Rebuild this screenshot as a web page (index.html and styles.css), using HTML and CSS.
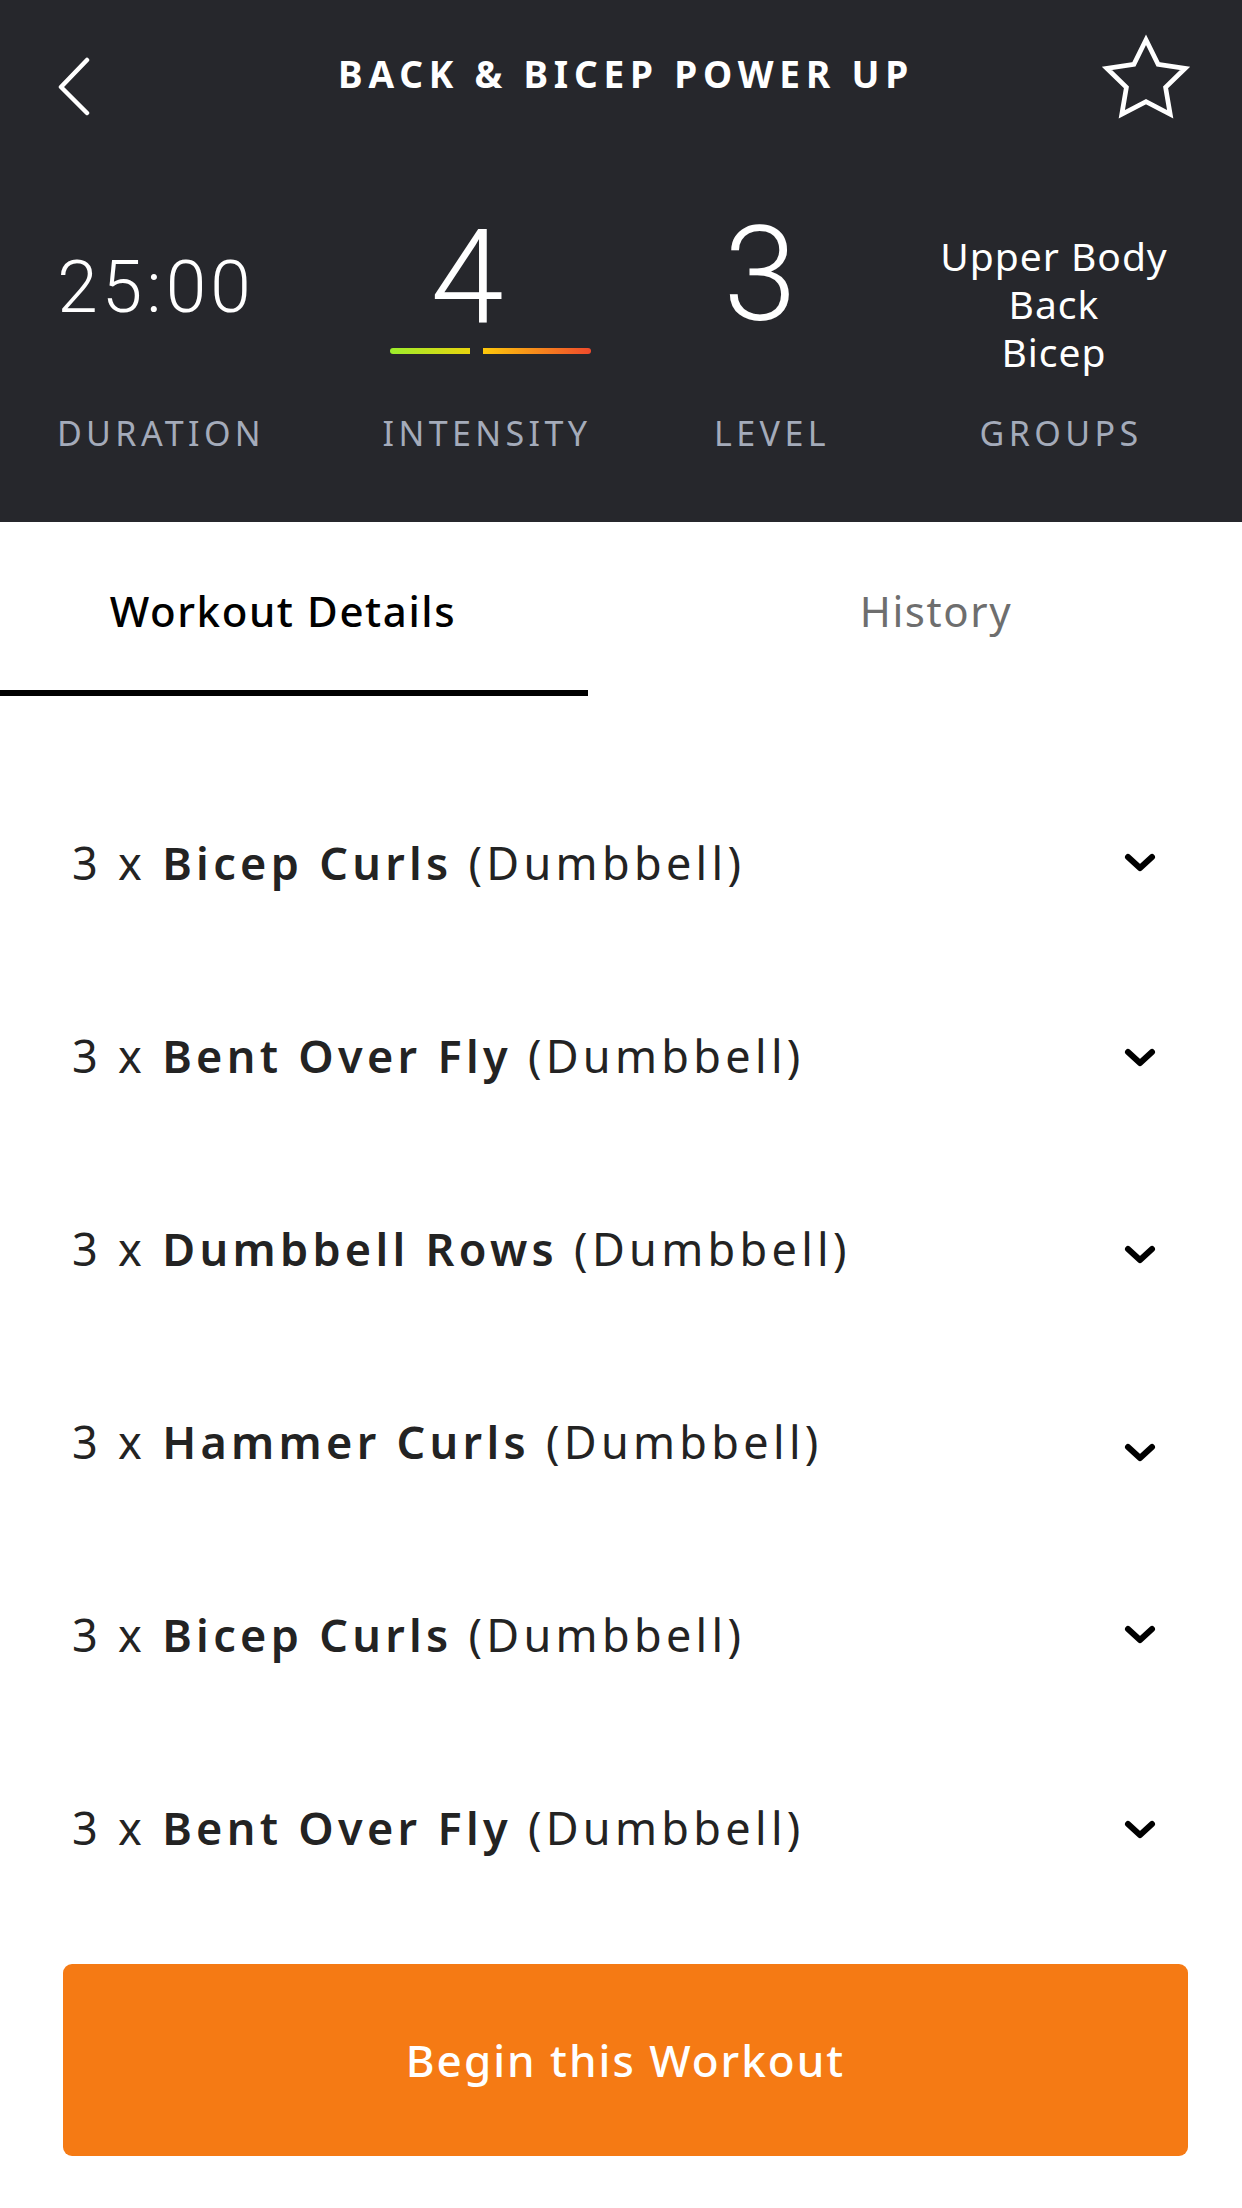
FILE: index.html
```html
<!DOCTYPE html>
<html lang="en">
<head>
<meta charset="utf-8">
<title>Back &amp; Bicep Power Up</title>
<link rel="stylesheet" href="styles.css">
</head>
<body>
<div class="app">
  <header class="hero">
    <div class="nav">
      <svg class="back" width="40" height="60" viewBox="0 0 40 60" aria-hidden="true">
        <path d="M32 3 L6 30 L32 56" fill="none" stroke="#fff" stroke-width="4.5" stroke-linecap="round" stroke-linejoin="round"/>
      </svg>
      <h1 class="title">BACK &amp; BICEP POWER UP</h1>
      <svg class="star" width="94" height="94" viewBox="0 0 24 24" aria-hidden="true">
        <path d="M12 2l3.09 6.26L22 9.27l-5 4.87 1.18 6.88L12 17.77l-6.18 3.25L7 14.14 2 9.27l6.91-1.01L12 2z" fill="none" stroke="#fff" stroke-width="1.2" stroke-linejoin="miter"/>
      </svg>
    </div>
    <div class="stats">
      <div class="stat stat-duration">
        <div class="value"><span class="num-md">25:00</span></div>
        <div class="label">DURATION</div>
      </div>
      <div class="stat stat-intensity">
        <div class="value">
          <span class="num-lg num-shift">4</span>
          <div class="bars"><span class="bar bar-a"></span><span class="bar bar-b"></span></div>
        </div>
        <div class="label">INTENSITY</div>
      </div>
      <div class="stat stat-level">
        <div class="value"><span class="num-lg">3</span></div>
        <div class="label">LEVEL</div>
      </div>
      <div class="stat stat-groups">
        <div class="value groups"><span class="g-line">Upper Body</span><span class="g-line">Back</span><span class="g-line">Bicep</span></div>
        <div class="label">GROUPS</div>
      </div>
    </div>
  </header>

  <nav class="tabs">
    <div class="tab tab-active">Workout Details</div>
    <div class="tab tab-muted">History</div>
  </nav>

  <ul class="list">
    <li class="row"><span class="ex">3 x <b>Bicep Curls</b> (Dumbbell)</span><svg class="chev" width="36" height="24" viewBox="0 0 36 24"><path d="M6 6 L18 17 L30 6" fill="none" stroke="#000" stroke-width="6" stroke-linecap="round" stroke-linejoin="round"/></svg></li>
    <li class="row"><span class="ex">3 x <b>Bent Over Fly</b> (Dumbbell)</span><svg class="chev chev-low" width="36" height="24" viewBox="0 0 36 24"><path d="M6 6 L18 17 L30 6" fill="none" stroke="#000" stroke-width="6" stroke-linecap="round" stroke-linejoin="round"/></svg></li>
    <li class="row"><span class="ex">3 x <b>Dumbbell Rows</b> (Dumbbell)</span><svg class="chev chev-lower" width="36" height="24" viewBox="0 0 36 24"><path d="M6 6 L18 17 L30 6" fill="none" stroke="#000" stroke-width="6" stroke-linecap="round" stroke-linejoin="round"/></svg></li>
    <li class="row"><span class="ex">3 x <b>Hammer Curls</b> (Dumbbell)</span><svg class="chev chev-lowest" width="36" height="24" viewBox="0 0 36 24"><path d="M6 6 L18 17 L30 6" fill="none" stroke="#000" stroke-width="6" stroke-linecap="round" stroke-linejoin="round"/></svg></li>
    <li class="row"><span class="ex">3 x <b>Bicep Curls</b> (Dumbbell)</span><svg class="chev" width="36" height="24" viewBox="0 0 36 24"><path d="M6 6 L18 17 L30 6" fill="none" stroke="#000" stroke-width="6" stroke-linecap="round" stroke-linejoin="round"/></svg></li>
    <li class="row"><span class="ex">3 x <b>Bent Over Fly</b> (Dumbbell)</span><svg class="chev chev-low" width="36" height="24" viewBox="0 0 36 24"><path d="M6 6 L18 17 L30 6" fill="none" stroke="#000" stroke-width="6" stroke-linecap="round" stroke-linejoin="round"/></svg></li>
  </ul>

  <div class="cta">
    <button class="begin" type="button">Begin this Workout</button>
  </div>
</div>
</body>
</html>
```

FILE: styles.css
```css
* { box-sizing: border-box; }

html, body {
  margin: 0;
  padding: 0;
  background: #ffffff;
}

body {
  font-family: "Noto Sans", "Open Sans", sans-serif;
  color: #232323;
}

.app {
  width: 1242px;
  min-height: 2208px;
  display: flex;
  flex-direction: column;
}

/* ---------- Header ---------- */
.hero {
  background: #26272c;
  height: 522px;
  color: #ffffff;
}

.nav {
  height: 154px;
  display: flex;
  align-items: center;
  padding: 0 49px 0 55px;
}

.back {
  flex: none;
  margin-top: 20px;
}

.title {
  flex: 1;
  margin: 0;
  text-align: center;
  font-size: 37px;
  font-weight: 700;
  letter-spacing: 5.8px;
  line-height: 1;
  padding-left: 58px;
  padding-bottom: 8px;
}

.star {
  flex: none;
  margin-top: 3px;
}

.stats {
  display: grid;
  grid-template-columns: 322px 330px 240px 338px;
  padding-right: 12px;
}

.stat {
  display: flex;
  flex-direction: column;
  align-items: center;
}

.value {
  height: 259px;
  display: flex;
  flex-direction: column;
  align-items: center;
}

.num-md {
  font-family: Roboto, "Noto Sans", sans-serif;
  font-weight: 300;
  font-size: 73px;
  line-height: 72px;
  letter-spacing: 4px;
}

.num-lg {
  font-family: Roboto, "Noto Sans", sans-serif;
  font-weight: 300;
  font-size: 132px;
  line-height: 128px;
}

.stat-duration .value { padding-top: 97px; padding-right: 10px; }
.stat-intensity .value { padding-top: 60px; }
.stat-level .value { padding-top: 57px; padding-right: 24px; }
.stat-groups .value { padding-top: 78px; padding-right: 14px; }

.num-shift { margin-right: 40px; }

.bars {
  display: flex;
  gap: 13px;
  margin-top: 6px;
  padding-left: 6px;
}

.bar {
  display: block;
  height: 6px;
}

.bar-a {
  width: 80px;
  background: linear-gradient(to right, #9ced2c, #e8d40e);
  border-radius: 3px 0 0 3px;
}

.bar-b {
  width: 108px;
  background: linear-gradient(to right, #fdc80b, #f04a2c);
  border-radius: 0 3px 3px 0;
}

.groups {
  font-size: 39px;
  text-align: center;
  letter-spacing: 1px;
}

.g-line {
  display: block;
  height: 48px;
  line-height: 48px;
}

.label {
  font-size: 34px;
  line-height: 40px;
  letter-spacing: 4.4px;
  color: #a4abba;
}

/* ---------- Tabs ---------- */
.tabs {
  display: flex;
  height: 174px;
}

.tab {
  font-size: 42px;
  line-height: 50px;
  padding-top: 64px;
  text-align: center;
  letter-spacing: 1.6px;
}

.tab-active {
  width: 588px;
  padding-right: 22px;
  font-weight: 500;
  color: #000000;
  border-bottom: 6px solid #000000;
}

.tab-muted {
  flex: 1;
  padding-left: 42px;
  color: #6e6e6e;
}

/* ---------- List ---------- */
.list {
  list-style: none;
  margin: 0;
  padding: 70px 0 0 0;
}

.row {
  height: 193px;
  display: flex;
  align-items: center;
  justify-content: space-between;
  padding: 0 84px 0 72px;
}

.ex {
  font-size: 45px;
  letter-spacing: 4.3px;
  color: #232323;
}

.ex b {
  font-weight: 600;
}

.chev { flex: none; }
.chev-low { margin-top: 4px; }
.chev-lower { margin-top: 12px; }
.chev-lowest { margin-top: 22px; }

/* ---------- CTA ---------- */
.cta {
  padding: 40px 54px 0 63px;
}

.begin {
  display: block;
  width: 100%;
  height: 192px;
  border: none;
  border-radius: 9px;
  background: #f57a14;
  color: #ffffff;
  font-family: "Noto Sans", "Open Sans", sans-serif;
  font-size: 44px;
  font-weight: 500;
  letter-spacing: 2px;
  cursor: pointer;
}
```
